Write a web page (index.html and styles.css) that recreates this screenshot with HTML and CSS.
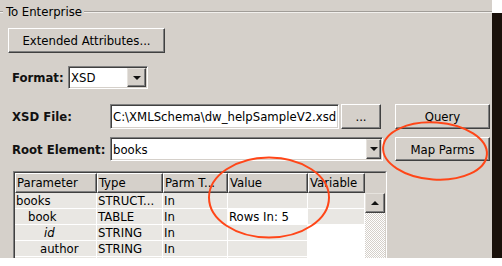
FILE: index.html
```html
<!DOCTYPE html>
<html lang="en">

<head>
    <meta charset="UTF-8">
    <title>To Enterprise</title>
    <link rel="stylesheet" href="styles.css">
</head>

<body>
    <div class="window">
        <!-- Group box title -->
        <div class="group-head">
            <span class="rule rule-short"></span>
            <span class="group-title">To Enterprise</span>
            <span class="rule"></span>
        </div>

        <div class="row row-ext">
            <button class="btn btn-ext">Extended Attributes...</button>
        </div>

        <div class="row row-format">
            <label class="field-label label-format">Format:</label>
            <div class="field combo combo-format">
                <span class="field-text">XSD</span>
                <span class="drop drop-lg"><span class="tri-down"></span></span>
            </div>
        </div>

        <div class="row row-file">
            <label class="field-label label-wide">XSD File:</label>
            <div class="field input-file"><span class="field-text">C:\XMLSchema\dw_helpSampleV2.xsd</span></div>
            <button class="btn btn-browse">...</button>
            <button class="btn btn-side">Query</button>
        </div>

        <div class="row row-root">
            <label class="field-label label-wide">Root Element:</label>
            <div class="field combo combo-root">
                <span class="field-text">books</span>
                <span class="drop drop-sm"><span class="tri-down"></span></span>
            </div>
            <button class="btn btn-side btn-map">Map Parms</button>
        </div>

        <!-- Parameter grid -->
        <div class="table">
            <div class="grid">
                <div class="th">Parameter</div>
                <div class="th">Type</div>
                <div class="th">Parm T...</div>
                <div class="th">Value</div>
                <div class="th">Variable</div>
                <div class="th-blank"></div>

                <div class="scroll">
                    <div class="scroll-up"><span class="tri-up"></span></div>
                    <div class="scroll-track"></div>
                </div>

                <div class="td">books</div>
                <div class="td">STRUCT...</div>
                <div class="td">In</div>
                <div class="td"></div>
                <div class="td"></div>

                <div class="td indent-1">book</div>
                <div class="td">TABLE</div>
                <div class="td">In</div>
                <div class="td td-white">Rows In: 5</div>
                <div class="td"></div>

                <div class="td indent-3"><em>id</em></div>
                <div class="td">STRING</div>
                <div class="td">In</div>
                <div class="td"></div>
                <div class="td td-white"></div>

                <div class="td indent-2">author</div>
                <div class="td">STRING</div>
                <div class="td">In</div>
                <div class="td"></div>
                <div class="td td-white"></div>

                <!-- next row, hidden under the window edge -->
                <div class="td"></div>
                <div class="td"></div>
                <div class="td"></div>
                <div class="td"></div>
                <div class="td td-white"></div>
            </div>
        </div>

        <!-- Hand drawn highlights -->
        <svg class="marks" width="492" height="258" viewBox="0 0 492 258">
            <ellipse cx="435" cy="151" rx="52" ry="28.5" transform="rotate(4 435 151)" />
            <ellipse cx="269" cy="197.5" rx="60" ry="40" />
        </svg>
    </div>
</body>

</html>
```

FILE: styles.css
```css
/* Global */
body {
    margin: 0;
    background: #fff;
    font-family: "DejaVu Sans Condensed", "Liberation Sans", sans-serif;
    font-size: 13px;
    color: #000;
}

.window {
    position: relative;
    width: 492px;
    height: 258px;
    overflow: hidden;
    background: #d5d0ca;
    box-shadow: 10px 13px 0 #1a110b;
}

/* Group box title */
.group-head {
    display: flex;
    align-items: center;
    height: 23px;
}

.rule {
    flex: 1;
    height: 0;
    border-top: 1px solid #a19d98;
    border-bottom: 1px solid #f2f0ed;
}

.rule-short {
    flex: 0 0 3px;
}

.group-title {
    padding: 0 2px 0 3px;
    line-height: 16px;
}

/* Rows */
.row {
    display: flex;
    align-items: center;
}

.row-ext {
    margin-top: 5px;
    padding-left: 8px;
}

.row-format {
    margin-top: 13px;
    padding-left: 12px;
    height: 23px;
}

.row-file {
    margin-top: 15px;
    padding-left: 12px;
    height: 25px;
}

.row-root {
    margin-top: 8px;
    padding-left: 12px;
    height: 24px;
}

.field-label {
    font-weight: bold;
    color: #111;
}

.label-format {
    width: 56px;
}

.label-wide {
    width: 98px;
}

/* Buttons */
.btn {
    box-sizing: border-box;
    font: inherit;
    color: #000;
    background: #d5d0ca;
    border: 1px solid;
    border-color: #fff #404040 #404040 #fff;
    box-shadow: inset -1px -1px #808080;
    padding: 0;
}

.btn-ext {
    width: 157px;
    height: 25px;
}

.btn-browse {
    width: 40px;
    height: 25px;
    margin-left: 2px;
}

.btn-side {
    width: 95px;
    height: 25px;
    margin-left: 14px;
}

.btn-map {
    height: 24px;
    margin-left: 12px;
}

/* Sunken fields */
.field {
    box-sizing: border-box;
    display: flex;
    align-items: center;
    height: 100%;
    background: #fff;
    border: 1px solid;
    border-color: #808080 #fff #fff #808080;
    box-shadow: inset 1px 1px #404040, inset -1px -1px #d5d0ca;
    padding: 1px;
    overflow: hidden;
}

.field-text {
    flex: 1;
    padding-left: 1px;
    white-space: nowrap;
}

.combo-format {
    width: 80px;
}

.input-file {
    width: 229px;
}

.combo-root {
    width: 273px;
}

.drop {
    box-sizing: border-box;
    display: flex;
    align-items: center;
    justify-content: center;
    height: 100%;
    background: #d5d0ca;
    border: 1px solid;
    border-color: #e6e3de #404040 #404040 #e6e3de;
    box-shadow: inset -1px -1px #808080;
}

.drop-lg {
    width: 19px;
}

.drop-sm {
    width: 15px;
}

.tri-down {
    width: 0;
    height: 0;
    border-left: 4px solid transparent;
    border-right: 4px solid transparent;
    border-top: 4px solid #111;
}

.tri-up {
    width: 0;
    height: 0;
    border-left: 4px solid transparent;
    border-right: 4px solid transparent;
    border-bottom: 4px solid #111;
}

/* Parameter grid */
.table {
    margin: 10px 0 0 13px;
    width: 374px;
    box-sizing: border-box;
    border: 1px solid;
    border-color: #808080 #fff #fff #808080;
}

.grid {
    display: grid;
    grid-template-columns: 82px 66px 65px 80px 57px 20px;
    grid-auto-rows: 16px;
    grid-template-rows: 20px;
    border: 1px solid;
    border-color: #404040 #d5d0ca #d5d0ca #404040;
}

.th {
    box-sizing: border-box;
    background: #d5d0ca;
    border: 1px solid;
    border-color: #fff #404040 #404040 #fff;
    box-shadow: inset -1px -1px #808080;
    padding-left: 1px;
    line-height: 17px;
    white-space: nowrap;
    overflow: hidden;
}

.th-blank {
    background: #d5d0ca;
}

.td {
    box-sizing: border-box;
    background: #e9e7e3;
    border-right: 1px solid #fff;
    border-bottom: 1px solid #fff;
    padding-left: 1px;
    line-height: 15px;
    white-space: nowrap;
    overflow: hidden;
}

.td-white {
    background: #fff;
}

.indent-1 {
    padding-left: 13px;
}

.indent-2 {
    padding-left: 25px;
}

.indent-3 {
    padding-left: 29px;
}

.scroll {
    grid-column: 6;
    grid-row: 2 / span 5;
    display: flex;
    flex-direction: column;
}

.scroll-up {
    box-sizing: border-box;
    display: flex;
    align-items: center;
    justify-content: center;
    height: 20px;
    background: #d5d0ca;
    border: 1px solid;
    border-color: #e6e3de #404040 #404040 #e6e3de;
    box-shadow: inset -1px -1px #808080;
}

.scroll-track {
    flex: 1;
    background: repeating-conic-gradient(#fff 0 25%, #d5d0ca 0 50%) 0 0 / 2px 2px;
}

/* Highlight ellipses */
.marks {
    position: absolute;
    top: 0;
    left: 0;
    pointer-events: none;
}

.marks ellipse {
    fill: none;
    stroke: #ff4618;
    stroke-width: 2;
}
```
